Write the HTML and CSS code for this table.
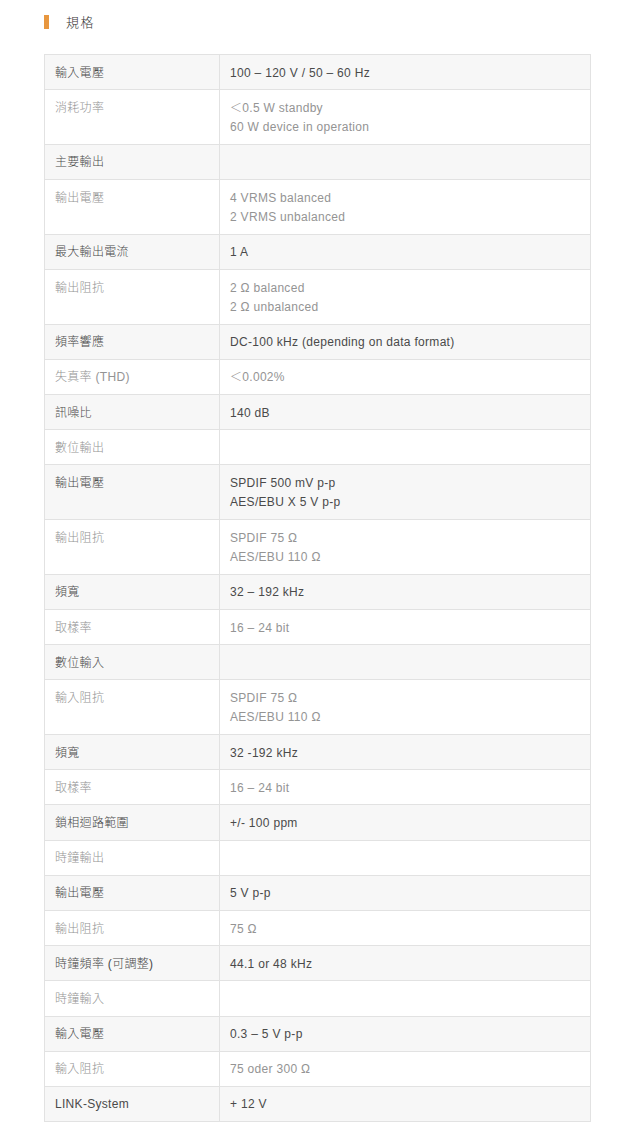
FILE: index.html
```html
<!DOCTYPE html>
<html lang="zh-Hant">
<head>
<meta charset="utf-8">
<title>規格</title>
<link rel="stylesheet" href="styles.css">
</head>
<body>
<div class="page">
  <h2 class="section-title"><span class="bar"></span>規格</h2>
  <table class="spec">
    <tbody>
      <tr><td class="k">輸入電壓</td><td>100 – 120 V / 50 – 60 Hz</td></tr>
      <tr><td class="k">消耗功率</td><td>＜0.5 W standby<br>60 W device in operation</td></tr>
      <tr><td class="k">主要輸出</td><td></td></tr>
      <tr><td class="k">輸出電壓</td><td>4 VRMS balanced<br>2 VRMS unbalanced</td></tr>
      <tr><td class="k">最大輸出電流</td><td>1 A</td></tr>
      <tr><td class="k">輸出阻抗</td><td>2 Ω balanced<br>2 Ω unbalanced</td></tr>
      <tr><td class="k">頻率響應</td><td>DC-100 kHz (depending on data format)</td></tr>
      <tr><td class="k">失真率 (THD)</td><td>＜0.002%</td></tr>
      <tr><td class="k">訊噪比</td><td>140 dB</td></tr>
      <tr><td class="k">數位輸出</td><td></td></tr>
      <tr><td class="k">輸出電壓</td><td>SPDIF 500 mV p-p<br>AES/EBU X 5 V p-p</td></tr>
      <tr><td class="k">輸出阻抗</td><td>SPDIF 75 Ω<br>AES/EBU 110 Ω</td></tr>
      <tr><td class="k">頻寬</td><td>32 – 192 kHz</td></tr>
      <tr><td class="k">取樣率</td><td>16 – 24 bit</td></tr>
      <tr><td class="k">數位輸入</td><td></td></tr>
      <tr><td class="k">輸入阻抗</td><td>SPDIF 75 Ω<br>AES/EBU 110 Ω</td></tr>
      <tr><td class="k">頻寬</td><td>32 -192 kHz</td></tr>
      <tr><td class="k">取樣率</td><td>16 – 24 bit</td></tr>
      <tr><td class="k">鎖相迴路範圍</td><td>+/- 100 ppm</td></tr>
      <tr><td class="k">時鐘輸出</td><td></td></tr>
      <tr><td class="k">輸出電壓</td><td>5 V p-p</td></tr>
      <tr><td class="k">輸出阻抗</td><td>75 Ω</td></tr>
      <tr><td class="k">時鐘頻率 (可調整)</td><td>44.1 or 48 kHz</td></tr>
      <tr><td class="k">時鐘輸入</td><td></td></tr>
      <tr><td class="k">輸入電壓</td><td>0.3 – 5 V p-p</td></tr>
      <tr><td class="k">輸入阻抗</td><td>75 oder 300 Ω</td></tr>
      <tr><td class="k">LINK-System</td><td>+ 12 V</td></tr>
    </tbody>
  </table>
</div>
</body>
</html>
```

FILE: styles.css
```css
html, body {
  margin: 0;
  padding: 0;
  background: #ffffff;
}

body {
  font-family: "Liberation Sans", Arial, "Noto Sans CJK TC", sans-serif;
  color: #444;
}

.page {
  padding: 15px 26px 0 44px;
}

.section-title {
  display: flex;
  align-items: center;
  gap: 17px;
  margin: 0 0 25px 0;
  height: 14px;
  font-size: 13px;
  font-weight: 300;
  line-height: 14px;
  letter-spacing: 1.5px;
  color: #333;
  font-family: "Noto Sans CJK TC", sans-serif;
}

.section-title .bar {
  display: block;
  width: 5px;
  height: 14px;
  background: #e8973f;
}

.spec {
  width: 547px;
  border-collapse: collapse;
  font-size: 12px;
  font-weight: 300;
  letter-spacing: 0.3px;
  line-height: 19.5px;
}

.spec td {
  border: 1px solid #e2e2e2;
  padding: 8.6px 10px 6.1px;
  vertical-align: top;
  text-align: left;
  color: #949494;
}

.spec td.k {
  width: 154px;
}

.spec tr:nth-child(odd) td {
  background: #f7f7f7;
  color: #4a4a4a;
}
```
